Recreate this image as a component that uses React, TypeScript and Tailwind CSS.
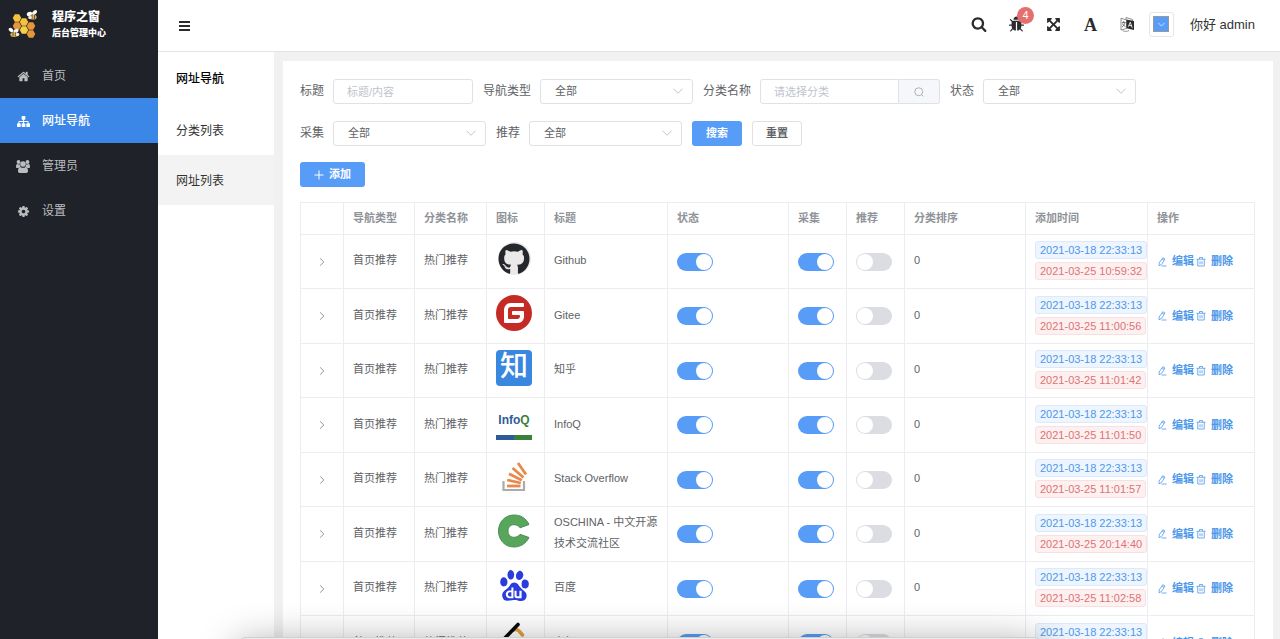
import React from "react";
import { FaGithub } from "react-icons/fa";
import { SiBaidu, SiGitee } from "react-icons/si";

const HOME =
  "M1472 992v480q0 26-19 45t-45 19h-384v-384h-256v384h-384q-26 0-45-19t-19-45v-480q0-1 .5-3t.5-3l575-474 575 474q1 2 1 6zm223-69l-62 74q-8 9-21 11h-3q-13 0-21-7l-692-577-692 577q-12 8-24 7-13-2-21-11l-62-74q-8-10-7-23.5t11-21.5l719-599q32-26 76-26t76 26l244 204v-195q0-14 9-23t23-9h192q14 0 23 9t9 23v408l219 182q10 8 11 21.5t-7 23.5z";
const SITEMAP =
  "M1792 1248v320q0 40-28 68t-68 28h-320q-40 0-68-28t-28-68v-320q0-40 28-68t68-28h96v-192h-512v192h96q40 0 68 28t28 68v320q0 40-28 68t-68 28h-320q-40 0-68-28t-28-68v-320q0-40 28-68t68-28h96v-192h-512v192h96q40 0 68 28t28 68v320q0 40-28 68t-68 28h-320q-40 0-68-28t-28-68v-320q0-40 28-68t68-28h96v-192q0-52 38-90t90-38h512v-192h-96q-40 0-68-28t-28-68v-320q0-40 28-68t68-28h320q40 0 68 28t28 68v320q0 40-28 68t-68 28h-96v192h512q52 0 90 38t38 90v192h96q40 0 68 28t28 68z";
const COG =
  "M1152 896q0-106-75-181t-181-75-181 75-75 181 75 181 181 75 181-75 75-181zm512-109v222q0 12-8 23t-20 13l-185 28q-19 54-39 91 35 50 107 138 10 12 10 25t-9 23q-27 37-99 108t-94 71q-12 0-26-9l-138-108q-44 23-91 38-16 136-29 186-7 28-36 28h-222q-14 0-24.5-8.5t-11.5-21.5l-28-184q-49-16-90-37l-141 107q-10 9-25 9-14 0-25-11-126-114-165-168-7-10-7-23 0-12 8-23 15-21 51-66.5t54-70.5q-27-50-41-99l-183-27q-13-2-21-12.5t-8-23.5v-222q0-12 8-23t19-13l186-28q14-46 39-92-40-57-107-138-10-12-10-24 0-10 9-23 26-36 98.5-107.5t94.5-71.5q13 0 26 10l138 107q44-23 91-38 16-136 29-186 7-28 36-28h222q14 0 24.5 8.5t11.5 21.5l28 184q49 16 90 37l142-107q9-9 24-9 13 0 25 10 129 119 165 170 7 8 7 22 0 12-8 23-15 21-51 66.5t-54 70.5q26 50 41 98l183 28q13 2 21 12.5t8 23.5z";
const SEARCH =
  "M1216 832q0-185-131.5-316.5t-316.5-131.5-316.5 131.5-131.5 316.5 131.5 316.5 316.5 131.5 316.5-131.5 131.5-316.5zm512 832q0 52-38 90t-90 38q-54 0-90-38l-343-342q-179 124-399 124-143 0-273.5-55.5t-225-150-150-225-55.5-273.5 55.5-273.5 150-225 225-150 273.5-55.5 273.5 55.5 225 150 150 225 55.5 273.5q0 220-124 399l343 343q37 37 37 90z";
const BUG =
  "M1696 960q0 26-19 45t-45 19h-224q0 171-67 290l208 209q19 19 19 45t-19 45q-18 19-45 19t-45-19l-198-197q-5 5-15 13t-42 28.5-65 36.5-82 29-97 13v-896h-128v896q-51 0-101.5-13.5t-87-33-66-39-43.5-32.5l-15-14-183 207q-20 21-48 21-24 0-43-16-19-18-20.5-44.5t15.5-46.5l202-227q-58-114-58-274h-224q-26 0-45-19t-19-45 19-45 45-19h224v-294l-173-173q-19-19-19-45t19-45 45-19 45 19l173 173h844l173-173q19-19 45-19t45 19 19 45-19 45l-173 173v294h224q26 0 45 19t19 45zm-480-576h-640q0-133 93.5-226.5t226.5-93.5 226.5 93.5 93.5 226.5z";
const ARROWS =
  "M1411 541l-355 355 355 355 144-144q29-31 70-14 39 17 39 59v448q0 26-19 45t-45 19h-448q-42 0-59-40-17-39 14-69l144-144-355-355-355 355 144 144q31 30 14 69-17 40-59 40h-448q-26 0-45-19t-19-45v-448q0-42 40-59 39-17 69 14l144 144 355-355-355-355-144 144q-19 19-45 19-12 0-24-5-40-17-40-59v-448q0-26 19-45t45-19h448q42 0 59 40 17 39-14 69l-144 144 355 355 355-355-144-144q-31-30-14-69 17-40 59-40h448q26 0 45 19t19 45v448q0 42-39 59-13 5-25 5-26 0-45-19z";

function Glyph({ d, className }: { d: string; className: string }) {
  return (
    <svg viewBox="0 0 1792 1792" fill="currentColor" className={className} aria-hidden="true">
      <path d={d} />
    </svg>
  );
}

function GroupIcon() {
  return (
    <svg viewBox="0 0 28 26" fill="currentColor" className="h-[13px] w-3.5" aria-hidden="true">
      <circle cx="5" cy="4" r="3.8" />
      <circle cx="23" cy="4" r="3.8" />
      <circle cx="14" cy="8" r="5.6" />
      <path d="M0 14c0-4 1-6 2.500-6 1.500 1.200 3.500 1.200 5 .4 0 2.200.6 4 2 5.600-2 0-3.500.9-4.500 2H2.500C1 16 0 15.300 0 14zM28 14c0-4-1-6-2.500-6-1.500 1.200-3.500 1.200-5 .4 0 2.200-.6 4-2 5.600 2 0 3.500.9 4.500 2h2.500c1.500 0 2.500-.7 2.500-2z" />
      <path d="M4 22.500c0-5 1.500-8.500 5-8.500 2.800 2.300 7.200 2.300 10 0 3.500 0 5 3.500 5 8.500 0 2-1.500 3.500-3.500 3.500h-13C5.500 26 4 24.500 4 22.500z" />
    </svg>
  );
}

function LanguageIcon() {
  return (
    <svg viewBox="0 0 28 30" className="h-[15px] w-3.5" fill="none" aria-hidden="true">
      <path d="M2 2.500 13 6v17L2 26z" stroke="#555" strokeWidth="1.300" />
      <path d="M4 11h7M7.500 8v3M10 11c-1 4-3 7-6 9M5 13c1 3 3 5 6 6" stroke="#444" strokeWidth="1.400" />
      <path d="M13 5 28 8v18l-15-3.500z" fill="#2b2b2b" />
      <path d="M12 5V1l13 4v3" stroke="#555" strokeWidth="1.300" />
      <path d="m16.500 19.500 4-9 4 11M18 16.500l5 1" stroke="#fff" strokeWidth="1.700" />
      <path d="M5 27c4 2.500 9 2.500 13 0" stroke="#666" strokeWidth="1.300" />
    </svg>
  );
}

function BeeLogo() {
  const hex = "M0-5 4.300-2.500V2.500L0 5-4.300 2.500V-2.500z";
  const cells: [number, number, string][] = [
    [17, 18, "#f5c33b"],
    [24, 22, "#f5c33b"],
    [17, 26, "#e8963a"],
    [24, 30, "#f7d04a"],
    [31, 26, "#e8963a"],
    [31, 34, "#e8963a"],
  ];
  return (
    <svg viewBox="8 9 30 30" className="size-[30px]" aria-hidden="true">
      {cells.map(([x, y, c]) => (
        <path key={`${x}-${y}`} d={hex} transform={`translate(${x} ${y}) rotate(30) scale(.86)`} fill={c} />
      ))}
      <g>
        <ellipse cx="29.500" cy="14" rx="2.800" ry="2" fill="#fff" transform="rotate(-20 29.500 14)" />
        <ellipse cx="34.500" cy="12.500" rx="3" ry="1.800" fill="#f4f4f4" transform="rotate(-45 34.500 12.500)" />
        <ellipse cx="33" cy="17" rx="3.600" ry="2.600" fill="#d9b45a" />
        <path d="M32 14.600v4.800M34.500 15v4.200" stroke="#3b3326" strokeWidth=".7" />
        <circle cx="30" cy="17.500" r="1.800" fill="#efe9dc" />
      </g>
      <g>
        <ellipse cx="11" cy="30" rx="2.600" ry="1.800" fill="#fff" transform="rotate(45 11 30)" />
        <ellipse cx="16" cy="31" rx="2.800" ry="1.800" fill="#f4f4f4" transform="rotate(-25 16 31)" />
        <ellipse cx="14" cy="34.500" rx="3.600" ry="2.600" fill="#d9b45a" />
        <path d="M13 32.300v4.400M15.500 32.500v4" stroke="#3b3326" strokeWidth=".7" />
        <circle cx="17.500" cy="34.500" r="1.800" fill="#efe9dc" />
      </g>
    </svg>
  );
}

function Chevron({ className }: { className: string }) {
  return (
    <svg viewBox="0 0 10 10" fill="none" stroke="currentColor" className={className} aria-hidden="true">
      <path d="M.5 2.700 5 7.300 9.500 2.700" />
    </svg>
  );
}

function SelectField({ id, label }: { id: string; label: string }) {
  return (
    <div className="flex items-center gap-[9px]">
      <label htmlFor={id} className="text-xs leading-[23px]">
        {label}
      </label>
      <div className="relative">
        <select
          id={id}
          className="block h-[25px] w-[153px] appearance-none rounded-[3px] border border-[#dfe1e6] bg-white pr-6 pl-3.5 text-[11px] text-[#606266]"
        >
          <option>全部</option>
        </select>
        <Chevron className="pointer-events-none absolute top-[7px] right-2.5 size-[10px] text-[#c0c4cc]" />
      </div>
    </div>
  );
}

function StackOverflowLogo() {
  return (
    <svg viewBox="0 0 36 36" className="size-9" fill="none" aria-hidden="true">
      <path d="M7.500 22v9h20.500v-9" stroke="#a9abae" strokeWidth="2.200" />
      <g stroke="#e8894b" strokeWidth="2.800">
        <path d="M11 27h13.500" />
        <path d="m11.200 21 13.600 3" />
        <path d="m13 14.800 12.800 6.500" />
        <path d="m16.500 9 11 9.500" />
        <path d="m22 4 8 11.500" />
      </g>
    </svg>
  );
}

function OsChinaLogo() {
  return (
    <svg viewBox="0 0 36 36" className="size-9" aria-hidden="true">
      <path
        d="M33 11.500C30 5 24.500 2 18 2 9 2 2.500 9 2.500 18S9 34 18 34c6.500 0 12-3.500 15-9.500l-9-3.200c-1.500 2-3.500 3-6 3-3.600 0-6-2.700-6-6.300s2.400-6.300 6-6.300c2.700 0 4.700 1.100 6 3.100z"
        fill="#58a55c"
        stroke="#4a8f58"
        strokeWidth="1"
      />
    </svg>
  );
}

function LeetCodeLogo() {
  return (
    <svg viewBox="0 0 36 36" className="size-9" fill="none" strokeLinecap="round" aria-hidden="true">
      <path d="M18 8c2-1 3.500-.5 5 1l3.500 4" stroke="#e3a13c" strokeWidth="3.600" />
      <path d="M22 2.500 7 18c-2 2-2 5 0 7l5.500 5.500c2 2 5 2 7 0l4-4" stroke="#0b0b0b" strokeWidth="3.600" />
      <path d="M16 19h13" stroke="#b3b3b3" strokeWidth="3.200" />
    </svg>
  );
}

function InfoQLogo() {
  return (
    <span className="flex size-9 flex-col justify-end gap-2">
      <span className="text-center text-xs leading-[13px] font-bold text-[#2d5b9a]">
        Info<span className="text-[#3a7f3a]">Q</span>
      </span>
      <span className="flex h-[5px]">
        <span className="flex-1 bg-[#2d5b9a]" />
        <span className="flex-1 bg-[#3a7f3a]" />
      </span>
    </span>
  );
}

type Site = { title: string; updated: string; logo: React.ReactNode };

const sites: Site[] = [
  {
    title: "Github",
    updated: "2021-03-25 10:59:32",
    logo: (
      <span className="flex size-9 items-center justify-center">
        <span className="flex size-[33px] items-center justify-center rounded-full bg-[#ebe9ea]">
          <FaGithub className="size-8 text-[#24272b]" />
        </span>
      </span>
    ),
  },
  { title: "Gitee", updated: "2021-03-25 11:00:56", logo: <SiGitee className="size-9 text-[#c62a25]" /> },
  {
    title: "知乎",
    updated: "2021-03-25 11:01:42",
    logo: (
      <span className="flex size-9 items-center justify-center rounded-sm bg-[#3a87e0] pb-0.5 text-[28px] leading-none font-medium text-white">
        知
      </span>
    ),
  },
  { title: "InfoQ", updated: "2021-03-25 11:01:50", logo: <InfoQLogo /> },
  { title: "Stack Overflow", updated: "2021-03-25 11:01:57", logo: <StackOverflowLogo /> },
  { title: "OSCHINA - 中文开源技术交流社区", updated: "2021-03-25 20:14:40", logo: <OsChinaLogo /> },
  {
    title: "百度",
    updated: "2021-03-25 11:02:58",
    logo: (
      <span className="flex size-9 items-center justify-center">
        <SiBaidu className="size-[31px] text-[#2a3cdc]" />
      </span>
    ),
  },
  { title: "力扣", updated: "2021-03-25 11:03:20", logo: <LeetCodeLogo /> },
];

function Switch({ label, on }: { label: string; on: boolean }) {
  return (
    <input
      type="checkbox"
      role="switch"
      aria-label={label}
      defaultChecked={on}
      className="block h-[18px] w-9 cursor-pointer appearance-none rounded-full bg-[#dcdde3] p-px before:block before:size-4 before:rounded-full before:bg-white checked:bg-[#579df8] checked:pl-[19px]"
    />
  );
}

function EditIcon() {
  return (
    <svg viewBox="0 0 20 20" fill="none" stroke="currentColor" strokeWidth="1.600" className="size-2.5" aria-hidden="true">
      <path d="M11.500 1.500 16 4 9 15l-5 2.500.3-5.500zM10 4l4 2.500M9 18h10" />
    </svg>
  );
}

function TrashIcon() {
  return (
    <svg viewBox="0 0 20 20" fill="none" stroke="currentColor" strokeWidth="1.600" className="size-2.5" aria-hidden="true">
      <path d="M1 4.500h18M3.500 4.500V18h13V4.500M7 4V1h6v3M8 8.500v6M12 8.500v6" />
    </svg>
  );
}

const headers = ["导航类型", "分类名称", "图标", "标题", "状态", "采集", "推荐", "分类排序", "添加时间", "操作"];
const cell = "border border-[#ebedf2] px-[9px] text-left";

function SiteTable() {
  return (
    <table className="mt-[15px] w-full table-fixed border-collapse text-[11px] leading-[21px]">
      <colgroup>
        <col className="w-[43px]" />
        <col className="w-[71px]" />
        <col className="w-[72px]" />
        <col className="w-[58px]" />
        <col className="w-[123px]" />
        <col />
        <col className="w-[58px]" />
        <col className="w-[58px]" />
        <col className="w-[121px]" />
        <col className="w-[122px]" />
        <col className="w-[107px]" />
      </colgroup>
      <thead>
        <tr className="h-8 text-[#909399]">
          <th className={cell} aria-label="展开" />
          {headers.map((h) => (
            <th key={h} className={cell}>
              {h}
            </th>
          ))}
        </tr>
      </thead>
      <tbody>
        {sites.map((s) => (
          <tr key={s.title} className="h-[54px] even:h-[55px]">
            <td className={cell}>
              <button type="button" aria-label="展开" className="flex size-6 items-center justify-center text-[#777]">
                <Chevron className="size-2 -rotate-90" />
              </button>
            </td>
            <td className={`${cell} pb-0.5`}>首页推荐</td>
            <td className={`${cell} pb-0.5`}>热门推荐</td>
            <td className={`${cell} pb-1.5`}>{s.logo}</td>
            <td className={`${cell} pb-0.5`}>{s.title}</td>
            <td className={cell}>
              <Switch label={`${s.title} 状态`} on />
            </td>
            <td className={cell}>
              <Switch label={`${s.title} 采集`} on />
            </td>
            <td className={cell}>
              <Switch label={`${s.title} 推荐`} on={false} />
            </td>
            <td className={`${cell} pb-0.5`}>0</td>
            <td className={cell}>
              <div className="flex flex-col items-start gap-[3px] pb-0.5 leading-4 whitespace-nowrap">
                <span className="rounded-[3px] border border-[#dbe9fb] bg-[#eef5fe] px-1 text-[#4d98ea]">
                  2021-03-18 22:33:13
                </span>
                <span className="rounded-[3px] border border-[#f9e0e0] bg-[#fcf0f0] px-1 text-[#de7373]">
                  {s.updated}
                </span>
              </div>
            </td>
            <td className={cell}>
              <div className="flex items-center gap-0.5 font-bold whitespace-nowrap text-[#4d98ea]">
                <button type="button" className="flex items-center gap-[5px]">
                  <EditIcon />
                  编辑
                </button>
                <button type="button" className="flex items-center gap-[5px]">
                  <TrashIcon />
                  删除
                </button>
              </div>
            </td>
          </tr>
        ))}
      </tbody>
    </table>
  );
}

function Sidebar() {
  const items = [
    { label: "首页", icon: <Glyph d={HOME} className="size-[13px]" /> },
    { label: "网址导航", icon: <Glyph d={SITEMAP} className="size-[13px]" />, active: true },
    { label: "管理员", icon: <GroupIcon /> },
    { label: "设置", icon: <Glyph d={COG} className="size-[13px]" /> },
  ];
  return (
    <aside className="w-[158px] shrink-0 bg-[#20222a]">
      <div className="flex h-[53px] items-start gap-3.5 pt-[9px] pl-2">
        <BeeLogo />
        <div className="flex flex-col font-black text-white">
          <span className="text-xs leading-[17px]">程序之窗</span>
          <span className="text-[9px] leading-[14px]">后台管理中心</span>
        </div>
      </div>
      <nav className="text-xs">
        {items.map((it) => (
          <a
            key={it.label}
            href="#"
            className={
              it.active
                ? "flex h-[45px] items-center gap-3 bg-[#3b87e8] pl-4 font-medium text-white"
                : "flex h-[45px] items-center gap-3 pl-4 text-[#bcbdbf]"
            }
          >
            <span className="flex w-3.5 justify-center pt-0.5">{it.icon}</span>
            <span>{it.label}</span>
          </a>
        ))}
      </nav>
    </aside>
  );
}

function TopBar() {
  const tool = "relative flex h-8 w-[37px] items-center justify-center";
  return (
    <header className="flex h-[52px] shrink-0 items-center border-b border-[#e4e4e4] bg-white pr-[25px] pb-[3px] pl-[21px] text-[#2b2b2b]">
      <button type="button" aria-label="折叠菜单" className="flex h-8 flex-col justify-center gap-0.5 pt-1">
        <span className="h-0.5 w-[11px] bg-current" />
        <span className="h-0.5 w-[11px] bg-current" />
        <span className="h-0.5 w-[11px] bg-current" />
      </button>
      <div className="ml-auto flex items-center">
        <button type="button" aria-label="搜索" className={tool}>
          <Glyph d={SEARCH} className="size-4" />
        </button>
        <button type="button" aria-label="调试" className={tool}>
          <Glyph d={BUG} className="size-[17px]" />
          <span className="absolute -top-px right-px flex size-[17px] items-center justify-center rounded-full bg-[#e4706e] text-[11px] text-white">
            4
          </span>
        </button>
        <button type="button" aria-label="全屏" className={tool}>
          <Glyph d={ARROWS} className="size-[15px]" />
        </button>
        <button
          type="button"
          aria-label="字体"
          className={`${tool} pt-0.5 font-['Liberation_Serif',serif] text-lg font-bold`}
        >
          A
        </button>
        <button type="button" aria-label="语言" className={tool}>
          <LanguageIcon />
        </button>
        <button
          type="button"
          aria-label="主题颜色"
          className="ml-[3px] flex size-[25px] items-center justify-center rounded-[3px] border border-[#e6e6e6]"
        >
          <span className="flex size-4 items-center justify-center border border-[#999] bg-[#579df8] text-white">
            <Chevron className="size-[7px]" />
          </span>
        </button>
        <span className="ml-4 pt-0.5 text-[13px] text-[#333]">你好 admin</span>
      </div>
    </header>
  );
}

export default function App() {
  return (
    <div className="flex h-screen overflow-hidden bg-[#f1f1f1] font-['Liberation_Sans','Noto_Sans_CJK_SC',sans-serif]">
      <Sidebar />
      <div className="flex min-w-0 flex-1 flex-col">
        <TopBar />
        <div className="flex min-h-0 flex-1">
          <nav className="w-[116px] shrink-0 bg-white text-xs text-[#333]">
            <h2 className="flex h-[53px] items-center pl-[18px] font-medium text-black">网址导航</h2>
            <a href="#" className="flex h-[50px] items-center pt-0.5 pl-[18px]">
              分类列表
            </a>
            <a href="#" className="flex h-[50px] items-center bg-[#f3f3f3] pt-0.5 pl-[18px]">
              网址列表
            </a>
          </nav>
          <main className="min-w-0 flex-1 overflow-hidden pt-[9px] pr-[7px] pl-[9px]">
            <div className="bg-white pt-[18px] pr-[18px] pb-5 pl-[17px] text-[#606266]">
              <form className="flex flex-wrap gap-x-2.5 gap-y-[17px]" onSubmit={(e) => e.preventDefault()}>
                <div className="flex items-center gap-[9px]">
                  <label htmlFor="title" className="text-xs leading-[23px]">
                    标题
                  </label>
                  <input
                    id="title"
                    placeholder="标题/内容"
                    className="h-[25px] w-[140px] rounded-[3px] border border-[#dfe1e6] px-[13px] text-[11px] placeholder:text-[#c0c4cc]"
                  />
                </div>
                <SelectField id="nav-type" label="导航类型" />
                <div className="flex items-center gap-[9px]">
                  <label htmlFor="category" className="text-xs leading-[23px]">
                    分类名称
                  </label>
                  <div className="flex">
                    <input
                      id="category"
                      placeholder="请选择分类"
                      className="h-[25px] w-[139px] rounded-l-[3px] border border-[#dfe1e6] px-[13px] text-[11px] placeholder:text-[#c0c4cc]"
                    />
                    <button
                      type="button"
                      aria-label="选择分类"
                      className="flex h-[25px] w-[41px] items-center justify-center rounded-r-[3px] border border-l-0 border-[#dfe1e6] bg-[#f5f7fb] text-[#9a9da3]"
                    >
                      <svg viewBox="0 0 20 20" fill="none" stroke="currentColor" strokeWidth="1.500" className="size-2.5" aria-hidden="true">
                        <circle cx="9.500" cy="9.500" r="8" />
                        <path d="m15.500 15.500 3.500 3.500" />
                      </svg>
                    </button>
                  </div>
                </div>
                <SelectField id="status" label="状态" />
                <SelectField id="collect" label="采集" />
                <SelectField id="recommend" label="推荐" />
                <button type="submit" className="h-[25px] rounded-[3px] bg-[#579df8] px-3.5 text-[11px] font-bold text-white">
                  搜索
                </button>
                <button type="reset" className="h-[25px] rounded-[3px] border border-[#dfe1e6] bg-white px-[13px] text-[11px] font-bold">
                  重置
                </button>
              </form>
              <button
                type="button"
                className="mt-4 flex h-[25px] items-center gap-[5px] rounded-[3px] bg-[#579df8] px-3.5 text-[11px] font-bold text-white"
              >
                <svg viewBox="0 0 10 10" stroke="currentColor" className="size-2.5" aria-hidden="true">
                  <path d="M5 .5v9M.5 5h9" />
                </svg>
                添加
              </button>
              <SiteTable />
            </div>
          </main>
        </div>
      </div>
      <div className="pointer-events-none fixed -bottom-[60px] left-1/2 h-[62px] w-[804px] -translate-x-1/2 rounded-t-lg border border-[#cfcfcf] bg-[#ececec] shadow-[0_8px_40px_rgba(0,0,0,0.4)]" />
    </div>
  );
}
